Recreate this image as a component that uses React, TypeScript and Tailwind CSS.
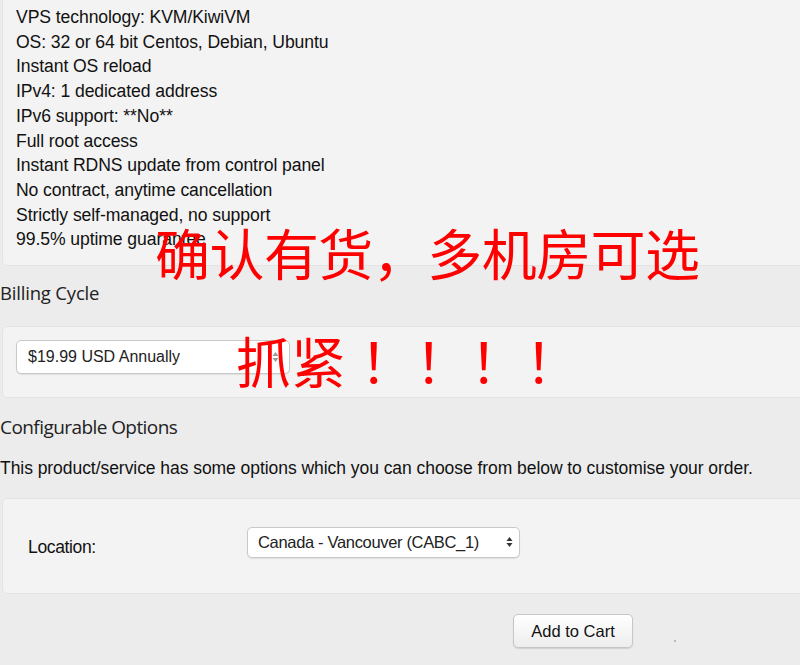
import React from 'react';

const features = [
  'VPS technology: KVM/KiwiVM',
  'OS: 32 or 64 bit Centos, Debian, Ubuntu',
  'Instant OS reload',
  'IPv4: 1 dedicated address',
  'IPv6 support: **No**',
  'Full root access',
  'Instant RDNS update from control panel',
  'No contract, anytime cancellation',
  'Strictly self-managed, no support',
  '99.5% uptime guarantee',
];

function Arrows({ color }: { color: string }) {
  return (
    <svg width="7" height="12" viewBox="0 0 7 12" className="shrink-0">
      <path d="M3.5 1 L6.5 5 L0.5 5 Z" fill={color} />
      <path d="M3.5 11 L6.5 7 L0.5 7 Z" fill={color} />
    </svg>
  );
}

function SelectBox({ label, className, arrow }: { label: string; className: string; arrow: string }) {
  return (
    <div
      className={`flex items-center justify-between bg-white border border-[#c9c9c9] rounded-[5px] shadow-[0_1px_1px_rgba(0,0,0,0.08)] ${className}`}
    >
      <span className="truncate">{label}</span>
      <Arrows color={arrow} />
    </div>
  );
}

export default function App() {
  return (
    <div
      className="relative w-[800px] h-[665px] overflow-hidden bg-[#ececec] text-[#111]"
      style={{ fontFamily: '"Liberation Sans", Arial, sans-serif' }}
    >
      {/* product features */}
      <div className="-mt-px mr-[-10px] ml-[2px] bg-[#f3f3f3] border border-t-0 border-[#e3e3e3] rounded-b-[5px] pl-[13px] pt-[6px] pb-[13px]">
        {features.map((f) => (
          <div key={f} className="text-[17.6px] leading-[24.7px] tracking-[-0.005em]">
            {f}
          </div>
        ))}
      </div>

      <h2
        className="mt-[15px] text-[18.5px] leading-[24px] text-[#222] tracking-[-0.01em]"
        style={{ fontFamily: '"Open Sans", sans-serif' }}
      >
        Billing Cycle
      </h2>

      <div className="mt-[21px] mr-[-10px] ml-[2px] bg-[#f3f3f3] border border-[#e3e3e3] rounded-[5px] pl-[13px] pt-[13px] pb-[23px]">
        <SelectBox
          label="$19.99 USD Annually"
          arrow="#9a9a9a"
          className="w-[274px] h-[34px] pl-[11px] pr-[10px] text-[16px] text-[#222]"
        />
      </div>

      <h2
        className="mt-[17px] text-[19px] leading-[24px] text-[#222] tracking-[-0.03em]"
        style={{ fontFamily: '"Open Sans", sans-serif' }}
      >
        Configurable Options
      </h2>

      <p className="mt-[19px] text-[17.5px] leading-[20px] tracking-[-0.003em]">
        This product/service has some options which you can choose from below to customise your order.
      </p>

      <div className="mt-[20px] mr-[-10px] ml-[2px] h-[96px] bg-[#f3f3f3] border border-[#e3e3e3] rounded-[5px] flex items-center pl-[25px]">
        <span className="w-[219px] text-[17.5px] mt-[2px] tracking-[-0.02em]">Location:</span>
        <SelectBox
          label="Canada - Vancouver (CABC_1)"
          arrow="#333"
          className="w-[273px] h-[31px] pl-[10px] pr-[6px] text-[16.5px] text-[#222] -mt-[8px] tracking-[-0.02em]"
        />
      </div>

      <div className="mt-[20px] flex items-end">
        <button className="ml-[513px] w-[120px] h-[34px] rounded-[5px] border border-[#c6c6c6] bg-gradient-to-b from-white to-[#ededed] shadow-[0_1px_1px_rgba(0,0,0,0.12)] text-[16.5px] text-[#111]">
          Add to Cart
        </button>
        <span className="ml-[41px] mb-[6px] w-[2px] h-[2px] rounded-full bg-[#aaa]" />
      </div>

      {/* overlay annotation */}
      <div
        className="absolute left-[155px] top-[218px] text-[#ff0000] text-[55px] leading-[66px] tracking-[-0.01em] whitespace-nowrap"
        style={{ fontFamily: '"Noto Sans CJK SC", sans-serif' }}
      >
        确认有货，多机房可选
      </div>
      <div
        className="absolute left-[236px] top-[326px] text-[#ff0000] text-[55px] leading-[66px] whitespace-nowrap"
        style={{ fontFamily: '"Noto Sans CJK SC", sans-serif' }}
      >
        抓紧<span className="ml-[14px]">！！！！</span>
      </div>
    </div>
  );
}
